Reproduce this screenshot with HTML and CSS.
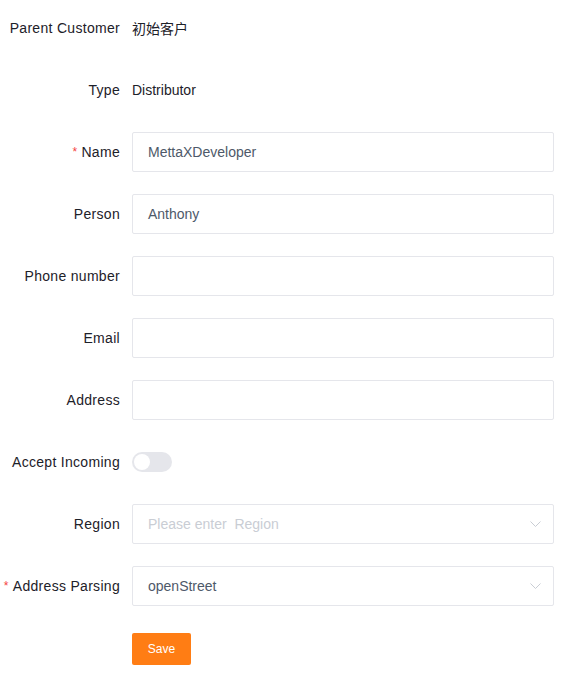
FILE: index.html
```html
<!DOCTYPE html>
<html>
<head>
<meta charset="utf-8">
<link rel="stylesheet" href="styles.css">
</head>
<body>
<form class="form">
  <div class="row">
    <label class="label">Parent Customer</label>
    <div class="field"><span class="text">初始客户</span></div>
  </div>
  <div class="row">
    <label class="label">Type</label>
    <div class="field"><span class="text">Distributor</span></div>
  </div>
  <div class="row">
    <label class="label"><span class="req">*</span>Name</label>
    <div class="field"><div class="input">MettaXDeveloper</div></div>
  </div>
  <div class="row">
    <label class="label">Person</label>
    <div class="field"><div class="input">Anthony</div></div>
  </div>
  <div class="row">
    <label class="label">Phone number</label>
    <div class="field"><div class="input"></div></div>
  </div>
  <div class="row">
    <label class="label">Email</label>
    <div class="field"><div class="input"></div></div>
  </div>
  <div class="row">
    <label class="label">Address</label>
    <div class="field"><div class="input"></div></div>
  </div>
  <div class="row">
    <label class="label">Accept Incoming</label>
    <div class="field"><span class="switch"><span class="knob"></span></span></div>
  </div>
  <div class="row">
    <label class="label">Region</label>
    <div class="field">
      <div class="input select"><span class="placeholder">Please enter&nbsp; Region</span>
        <svg class="chev" width="11" height="6" viewBox="0 0 11 6"><path d="M0.5 0.5 L5.5 5.5 L10.5 0.5" fill="none" stroke="#c9cdd4" stroke-width="1"/></svg>
      </div>
    </div>
  </div>
  <div class="row">
    <label class="label"><span class="req">*</span>Address Parsing</label>
    <div class="field">
      <div class="input select"><span>openStreet</span>
        <svg class="chev" width="11" height="6" viewBox="0 0 11 6"><path d="M0.5 0.5 L5.5 5.5 L10.5 0.5" fill="none" stroke="#c9cdd4" stroke-width="1"/></svg>
      </div>
    </div>
  </div>
  <div class="row actions">
    <div class="label"></div>
    <div class="field"><button type="button" class="btn">Save</button></div>
  </div>
</form>
</body>
</html>
```
FILE: styles.css
```css
html, body {
  margin: 0;
  padding: 0;
  background: #ffffff;
}
body {
  padding: 8px 0 0 8px;
  font-family: "Liberation Sans", Arial, "Noto Sans CJK SC", sans-serif;
  font-size: 14px;
  color: #1d2129;
}
.form {
  width: 546px;
  display: flex;
  flex-direction: column;
  gap: 22px;
}
.row {
  display: flex;
  align-items: center;
  height: 40px;
}
.actions {
  height: 32px;
  margin-top: 5px;
}
.label {
  width: 124px;
  box-sizing: border-box;
  padding-right: 12px;
  display: flex;
  justify-content: flex-end;
  align-items: baseline;
  white-space: nowrap;
  color: #1d2129;
  letter-spacing: 0.3px;
  flex-shrink: 0;
}
.req {
  color: #f53f3f;
  margin-right: 4px;
  font-size: 12px;
  position: relative;
  top: -1px;
}
.field {
  flex: 1;
  display: flex;
  align-items: center;
}
.text {
  color: #1d2129;
}
.input {
  box-sizing: border-box;
  width: 100%;
  height: 40px;
  border: 1px solid #e5e6eb;
  border-radius: 2px;
  padding: 0 15px;
  display: flex;
  align-items: center;
  color: #4e5969;
  background: #fff;
}
.select {
  justify-content: space-between;
  padding-right: 12px;
}
.placeholder {
  color: #c9cdd4;
}
.chev {
  display: block;
}
.switch {
  width: 40px;
  height: 20px;
  border-radius: 10px;
  background: #e5e6eb;
  display: flex;
  align-items: center;
  padding-left: 2px;
  box-sizing: border-box;
}
.knob {
  width: 16px;
  height: 16px;
  border-radius: 50%;
  background: #fff;
}
.btn {
  width: 59px;
  height: 32px;
  border: none;
  border-radius: 2px;
  background: #ff7d14;
  color: #fff;
  font-family: "Liberation Sans", Arial, sans-serif;
  font-size: 12px;
  padding: 0;
}
```
